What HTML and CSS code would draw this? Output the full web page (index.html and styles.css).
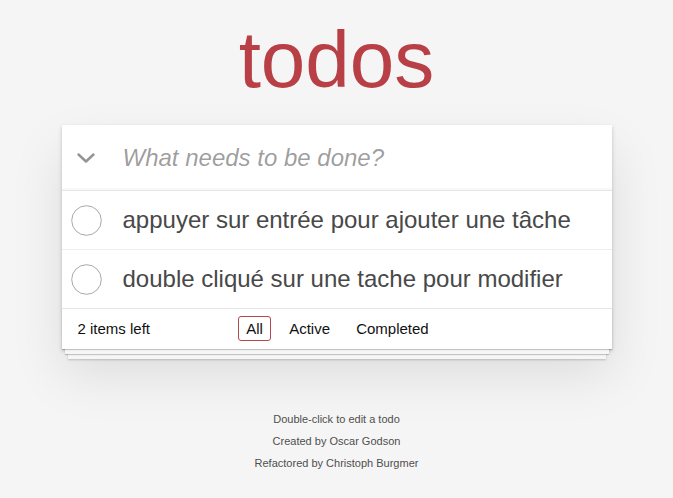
FILE: index.html
```html
<!DOCTYPE html>
<html lang="fr">
<head>
<meta charset="utf-8">
<title>todos</title>
<link rel="stylesheet" href="styles.css">
</head>
<body>
<div class="page">
  <h1 class="title">todos</h1>
  <section class="todoapp">
    <header class="new-row">
      <span class="toggle-all">
        <svg width="18" height="10" viewBox="0 0 18 10" aria-hidden="true"><polyline points="1.5,1.5 9,8.5 16.5,1.5" fill="none" stroke="#949494" stroke-width="2.4" stroke-linecap="round" stroke-linejoin="round"/></svg>
      </span>
      <input class="new-todo" placeholder="What needs to be done?">
    </header>
    <ul class="todo-list">
      <li class="todo">
        <span class="toggle"><svg width="31" height="31" viewBox="0 0 31 31" aria-hidden="true"><circle cx="15.5" cy="15.5" r="14.8" fill="none" stroke="#a8a8a8" stroke-width="1"/></svg></span>
        <label class="todo-label">appuyer sur entrée pour ajouter une tâche</label>
      </li>
      <li class="todo">
        <span class="toggle"><svg width="31" height="31" viewBox="0 0 31 31" aria-hidden="true"><circle cx="15.5" cy="15.5" r="14.8" fill="none" stroke="#a8a8a8" stroke-width="1"/></svg></span>
        <label class="todo-label">double cliqué sur une tache pour modifier</label>
      </li>
    </ul>
    <footer class="footer">
      <span class="todo-count">2 items left</span>
      <ul class="filters">
        <li><a class="selected" href="#/">All</a></li>
        <li><a href="#/active">Active</a></li>
        <li><a href="#/completed">Completed</a></li>
      </ul>
      <span></span>
    </footer>
  </section>
  <footer class="info">
    <p>Double-click to edit a todo</p>
    <p>Created by Oscar Godson</p>
    <p>Refactored by Christoph Burgmer</p>
  </footer>
</div>
</body>
</html>
```
FILE: styles.css
```css
html, body {
  margin: 0;
  padding: 0;
}
body {
  background: #f5f5f5;
  font-family: "Liberation Sans", Arial, sans-serif;
  font-size: 14px;
  line-height: 1.4em;
  color: #111111;
}
.page {
  max-width: 550px;
  margin: 0 auto;
}
.title {
  margin: 20px 0 25px;
  font-size: 80px;
  line-height: 80px;
  font-weight: 400;
  text-align: center;
  color: #b83f45;
}
.todoapp {
  background: #fff;
  box-shadow: 0 2px 4px 0 rgba(0, 0, 0, 0.2), 0 25px 50px 0 rgba(0, 0, 0, 0.1);
}
.new-row {
  display: flex;
  align-items: center;
  height: 65px;
  box-shadow: inset 0 -2px 1px rgba(0, 0, 0, 0.03);
}
.toggle-all {
  width: 49px;
  display: flex;
  justify-content: center;
  align-items: center;
}
.toggle-all svg {
  display: block;
}
.new-todo {
  flex: 1;
  min-width: 0;
  height: 65px;
  margin: 0;
  padding: 16px 16px 16px 12px;
  border: none;
  outline: none;
  background: transparent;
  font-family: inherit;
  font-size: 24px;
  line-height: 1.4em;
  color: #111;
  box-sizing: border-box;
}
.new-todo::placeholder {
  font-style: italic;
  color: rgba(0, 0, 0, 0.4);
}
.todo-list {
  margin: 0;
  padding: 0;
  list-style: none;
  border-top: 1px solid #e6e6e6;
}
.todo {
  display: flex;
  align-items: center;
  border-bottom: 1px solid #ededed;
}
.todo:last-child {
  border-bottom: none;
}
.toggle {
  display: flex;
  margin-left: 9px;
  width: 31px;
}
.toggle svg {
  display: block;
}
.todo-label {
  display: block;
  padding: 15px 15px 15px 21px;
  font-size: 24px;
  line-height: 28px;
  color: #484848;
}
.footer {
  display: grid;
  grid-template-columns: 1fr auto 1fr;
  align-items: center;
  height: 20px;
  padding: 10px 14px 10px 16px;
  border-top: 1px solid #e6e6e6;
  font-size: 15px;
  box-shadow: 0 1px 1px rgba(0, 0, 0, 0.2),
              0 8px 0 -3px #f6f6f6,
              0 9px 1px -3px rgba(0, 0, 0, 0.2),
              0 16px 0 -6px #f6f6f6,
              0 17px 2px -6px rgba(0, 0, 0, 0.2);
}
.todo-count {
  text-align: left;
}
.filters {
  margin: 0;
  padding: 0;
  list-style: none;
}
.filters li {
  display: inline;
}
.filters a {
  color: inherit;
  margin: 3px;
  padding: 3px 7px;
  text-decoration: none;
  border: 1px solid transparent;
  border-radius: 3px;
}
.filters a.selected {
  border-color: #b4484b;
}
.info {
  margin: 65px auto 0;
  color: #4d4d4d;
  font-size: 11px;
  text-shadow: 0 1px 0 rgba(255, 255, 255, 0.5);
  text-align: center;
}
.info p {
  line-height: 1;
  margin: 11px 0;
}
```
